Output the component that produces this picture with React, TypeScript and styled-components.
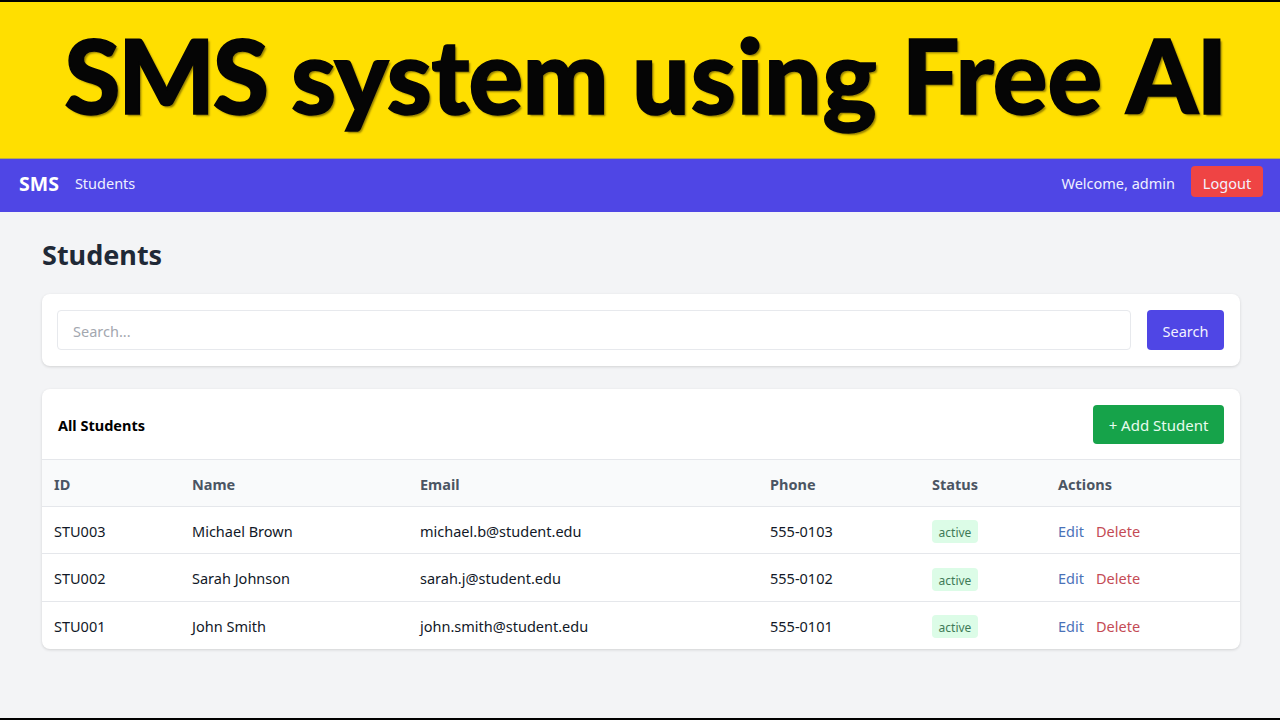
import styled, { createGlobalStyle } from "styled-components";

const GlobalStyle = createGlobalStyle`
  * {
    box-sizing: border-box;
  }

  html,
  body {
    margin: 0;
    padding: 0;
    background: #000;
    overflow: hidden;
  }

  body {
    font-family: "Noto Sans", "Open Sans", sans-serif;
  }
`;

const Frame = styled.div`
  width: 1280px;
  height: 720px;
  padding: 2px 0;
  background: #000;
  display: flex;
  flex-direction: column;
`;

const Banner = styled.header`
  height: 157px;
  flex-shrink: 0;
  padding: 0 0 11px 10px;
  background: #ffdf00;
  display: flex;
  align-items: center;
  justify-content: center;
  border-bottom: 1px solid #b9ab4a;
`;

const BannerTitle = styled.h1`
  margin: 0;
  font-family: "Lato", sans-serif;
  font-size: 102px;
  font-weight: 900;
  line-height: 1;
  color: #050505;
  -webkit-text-stroke: 1.5px #050505;
  white-space: nowrap;
  text-shadow: 2px 2px 2px rgba(90, 75, 0, 0.65);
`;

const BannerWord = styled.span<{ $spacing: number }>`
  letter-spacing: ${(p) => p.$spacing}px;
`;

const NavBar = styled.nav`
  height: 53px;
  flex-shrink: 0;
  background: #4f46e5;
  padding: 0 17px 5px 19px;
  display: flex;
  align-items: center;
  justify-content: space-between;
  color: #fff;
`;

const NavGroup = styled.div`
  display: flex;
  align-items: center;
  gap: 16px;
`;

const Brand = styled.span`
  font-size: 19.5px;
  font-weight: 700;
`;

const NavText = styled.span`
  font-size: 14.5px;
  color: #eef0ff;
`;

const Button = styled.button<{ $bg: string }>`
  border: none;
  border-radius: 4px;
  padding: 2px 0 0;
  background: ${(p) => p.$bg};
  color: #f2f2ff;
  font-family: inherit;
  font-size: 14.5px;
`;

const LogoutButton = styled(Button)`
  width: 72px;
  height: 31px;
  margin-bottom: 3px;
`;

const Main = styled.main`
  flex: 1;
  background: #f3f4f6;
  padding: 24px 40px 0 42px;
`;

const PageTitle = styled.h2`
  margin: 0 0 20px;
  font-size: 27px;
  line-height: 38px;
  font-weight: 700;
  color: #1f2937;
`;

const Card = styled.section`
  background: #fff;
  border-radius: 8px;
  box-shadow: 0 1px 3px rgba(0, 0, 0, 0.14);
`;

const SearchCard = styled(Card)`
  height: 72px;
  padding: 16px 16px 16px 15px;
  margin-bottom: 23px;
  display: flex;
  gap: 16px;
`;

const SearchInput = styled.input`
  flex: 1;
  height: 40px;
  padding: 1px 15px 0;
  border: 1px solid #e7e9ed;
  border-radius: 4px;
  background: #fff;
  font-family: inherit;
  font-size: 14.5px;

  &::placeholder {
    color: #a3a7af;
    opacity: 1;
  }
`;

const SearchButton = styled(Button)`
  width: 77px;
  height: 40px;
`;

const CardHeader = styled.div`
  height: 70px;
  padding: 0 16px;
  display: flex;
  align-items: center;
  justify-content: space-between;
`;

const CardTitle = styled.h3`
  margin: 2px 0 0;
  font-size: 14.5px;
  font-weight: 700;
  color: #000;
`;

const AddButton = styled(Button)`
  width: 131px;
  height: 39px;
  font-size: 15px;
  color: #e8fbee;
`;

const Table = styled.table`
  width: 100%;
  border-collapse: collapse;
  table-layout: fixed;
  font-size: 14.5px;
`;

const HeadCell = styled.th<{ $width?: number }>`
  width: ${(p) => (p.$width ? `${p.$width}px` : "auto")};
  height: 47px;
  padding: 2px 12px 0;
  background: #f9fafb;
  border-top: 1px solid #e5e7eb;
  border-bottom: 1px solid #e5e7eb;
  text-align: left;
  font-weight: 700;
  color: #4b5563;
`;

const Row = styled.tr`
  & + & td {
    border-top: 1px solid #e5e7eb;
  }
`;

const Cell = styled.td`
  height: 47.4px;
  padding: 1px 12px 0;
  color: #111827;
`;

const StatusBadge = styled.span`
  display: inline-block;
  width: 46px;
  height: 23px;
  margin-top: 2px;
  border-radius: 4px;
  background: #dcfce7;
  color: #3f7a57;
  font-size: 12px;
  line-height: 25px;
  text-align: center;
  vertical-align: middle;
`;

const ActionLink = styled.a<{ $color: string }>`
  color: ${(p) => p.$color};
  margin-right: 12px;
`;

const bannerWords = [
  { text: "SMS", spacing: -2.3 },
  { text: "system", spacing: -0.7 },
  { text: "using", spacing: 0.8 },
  { text: "Free", spacing: 0 },
  { text: "AI", spacing: -1.5 },
];

const students = [
  { id: "STU003", name: "Michael Brown", email: "michael.b@student.edu", phone: "555-0103" },
  { id: "STU002", name: "Sarah Johnson", email: "sarah.j@student.edu", phone: "555-0102" },
  { id: "STU001", name: "John Smith", email: "john.smith@student.edu", phone: "555-0101" },
];

export default function App() {
  return (
    <Frame>
      <GlobalStyle />
      <Banner>
        <BannerTitle>
          {bannerWords.map((w, i) => (
            <span key={w.text}>
              {i > 0 && " "}
              <BannerWord $spacing={w.spacing}>{w.text}</BannerWord>
            </span>
          ))}
        </BannerTitle>
      </Banner>

      <NavBar>
        <NavGroup>
          <Brand>SMS</Brand>
          <NavText>Students</NavText>
        </NavGroup>
        <NavGroup>
          <NavText>Welcome, admin</NavText>
          <LogoutButton $bg="#ef4444">Logout</LogoutButton>
        </NavGroup>
      </NavBar>

      <Main>
        <PageTitle>Students</PageTitle>

        <SearchCard>
          <SearchInput placeholder="Search..." />
          <SearchButton $bg="#4f46e5">Search</SearchButton>
        </SearchCard>

        <Card>
          <CardHeader>
            <CardTitle>All Students</CardTitle>
            <AddButton $bg="#16a34a">+ Add Student</AddButton>
          </CardHeader>
          <Table>
            <thead>
              <tr>
                <HeadCell $width={138}>ID</HeadCell>
                <HeadCell $width={228}>Name</HeadCell>
                <HeadCell $width={350}>Email</HeadCell>
                <HeadCell $width={162}>Phone</HeadCell>
                <HeadCell $width={126}>Status</HeadCell>
                <HeadCell>Actions</HeadCell>
              </tr>
            </thead>
            <tbody>
              {students.map((s) => (
                <Row key={s.id}>
                  <Cell>{s.id}</Cell>
                  <Cell>{s.name}</Cell>
                  <Cell>{s.email}</Cell>
                  <Cell>{s.phone}</Cell>
                  <Cell>
                    <StatusBadge>active</StatusBadge>
                  </Cell>
                  <Cell>
                    <ActionLink $color="#4a72b8">Edit</ActionLink>
                    <ActionLink $color="#c44b55">Delete</ActionLink>
                  </Cell>
                </Row>
              ))}
            </tbody>
          </Table>
        </Card>
      </Main>
    </Frame>
  );
}
